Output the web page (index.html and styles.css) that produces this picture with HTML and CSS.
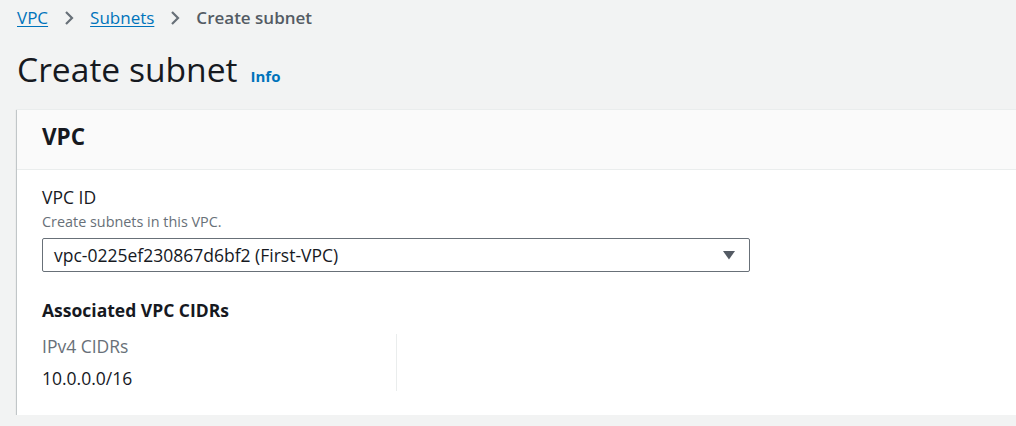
FILE: index.html
```html
<!DOCTYPE html>
<html lang="en">
<head>
<meta charset="utf-8">
<title>Create subnet</title>
<link rel="stylesheet" href="styles.css">
</head>
<body>
<div class="page">
  <nav class="breadcrumbs">
    <a class="crumb-link" href="#">VPC</a>
    <svg class="chevron" width="16" height="16" viewBox="0 0 16 16"><path d="M5 2 L11 8 L5 14" fill="none" stroke="#687078" stroke-width="2.2"/></svg>
    <a class="crumb-link" href="#">Subnets</a>
    <svg class="chevron" width="16" height="16" viewBox="0 0 16 16"><path d="M5 2 L11 8 L5 14" fill="none" stroke="#687078" stroke-width="2.2"/></svg>
    <span class="crumb-current">Create subnet</span>
  </nav>

  <div class="page-header">
    <h1 class="page-title">Create subnet</h1>
    <a class="info-link" href="#">Info</a>
  </div>

  <section class="card">
    <div class="card-header">
      <h2 class="card-title">VPC</h2>
    </div>
    <div class="card-body">
      <div class="field">
        <div class="field-label">VPC ID</div>
        <div class="field-desc">Create subnets in this VPC.</div>
        <div class="select">
          <span class="select-value">vpc-0225ef230867d6bf2 (First-VPC)</span>
          <svg class="select-caret" width="14" height="10" viewBox="0 0 14 10"><path d="M1 1 H13 L7 9.5 Z" fill="#545b64"/></svg>
        </div>
      </div>

      <h3 class="sub-title">Associated VPC CIDRs</h3>
      <div class="kv-columns">
        <div class="kv-col">
          <div class="kv-key">IPv4 CIDRs</div>
          <div class="kv-value">10.0.0.0/16</div>
        </div>
      </div>
    </div>
  </section>
</div>
</body>
</html>
```

FILE: styles.css
```css
* {
  box-sizing: border-box;
}

html, body {
  margin: 0;
  padding: 0;
  background: #f2f3f3;
}

body {
  font-family: "Open Sans", "Noto Sans", sans-serif;
  color: #16191f;
  font-size: 17.5px;
  line-height: 25px;
  overflow: hidden;
}

.page {
  padding: 5px 0 0 17px;
}

.breadcrumbs {
  display: flex;
  align-items: center;
  height: 25px;
  font-size: 17px;
}

.crumb-link {
  color: #0073bb;
  text-decoration: underline;
  text-underline-offset: 2px;
}

.chevron {
  margin: 0 13px 0 13px;
  flex: none;
}

.crumb-current {
  color: #545b64;
  font-weight: 600;
}

.page-header {
  display: flex;
  align-items: baseline;
  margin-top: 19px;
}

.page-title {
  margin: 0;
  font-size: 33.6px;
  line-height: 41px;
  font-weight: 400;
  color: #16191f;
}

.info-link {
  margin-left: 13px;
  font-size: 15px;
  font-weight: 700;
  color: #0073bb;
  text-decoration: none;
}

.card {
  margin-top: 19px;
  margin-right: -40px;
  background: #fff;
  border-top: 1px solid #eaeded;
  box-shadow: 0 1px 1px 0 rgba(0, 28, 36, 0.35), 1px 1px 1px 0 rgba(0, 28, 36, 0.15), -1px 1px 1px 0 rgba(0, 28, 36, 0.15);
}

.card-header {
  background: #fafafa;
  border-bottom: 1px solid #eaeded;
  padding: 13px 25px 18px;
}

.card-title {
  margin: 0;
  font-size: 22.5px;
  line-height: 28px;
  font-weight: 700;
  color: #16191f;
}

.card-body {
  padding: 15px 25px 24px;
}

.field-label {
  color: #16191f;
}

.field-desc {
  margin-top: 2px;
  font-size: 14.4px;
  line-height: 20px;
  color: #687078;
}

.select {
  margin-top: 6px;
  width: 708px;
  height: 34px;
  border: 1px solid #687078;
  border-radius: 2px;
  background: #fff;
  display: flex;
  align-items: center;
  justify-content: space-between;
  padding: 0 13px 0 11px;
}

.select-value {
  color: #16191f;
}

.sub-title {
  margin: 26px 0 0;
  font-size: 17.5px;
  line-height: 25px;
  font-weight: 700;
  color: #16191f;
}

.kv-columns {
  display: flex;
  margin-top: 11px;
}

.kv-col {
  width: 355px;
  border-right: 1px solid #eaeded;
}

.kv-key {
  color: #687078;
}

.kv-value {
  margin-top: 7px;
  color: #16191f;
}
```
